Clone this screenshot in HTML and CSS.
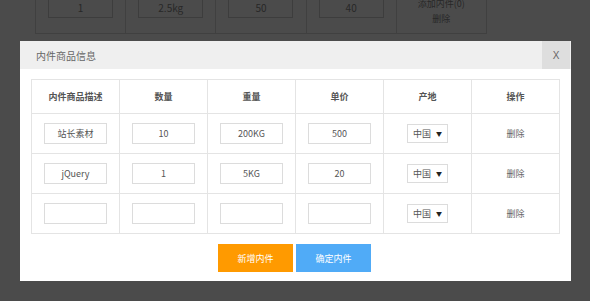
FILE: index.html
```html
<!DOCTYPE html>
<html>

<head>
  <title>内件商品信息</title>
  <link rel="stylesheet" href="styles.css">
</head>

<body>
  <div class="page">
    <table class="goods">
      <tr>
        <td><input class="goods-input" value="1"></td>
        <td><input class="goods-input" value="2.5kg"></td>
        <td><input class="goods-input" value="50"></td>
        <td><input class="goods-input" value="40"></td>
        <td class="goods-ops">
          <a href="#">添加内件(0)</a>
          <a href="#">删除</a>
        </td>
      </tr>
    </table>
  </div>

  <div class="mask"></div>

  <div class="dialog">
    <div class="dialog-head">
      <span class="dialog-title">内件商品信息</span>
      <button class="dialog-close">X</button>
    </div>

    <div class="dialog-body">
      <table class="parts">
        <tr>
          <th>内件商品描述</th>
          <th>数量</th>
          <th>重量</th>
          <th>单价</th>
          <th>产地</th>
          <th>操作</th>
        </tr>
        <tr>
          <td><input class="part-input" value="站长素材"></td>
          <td><input class="part-input" value="10"></td>
          <td><input class="part-input" value="200KG"></td>
          <td><input class="part-input" value="500"></td>
          <td>
            <span class="select-wrap">
              <select class="part-select">
                <option>中国</option>
              </select>
            </span>
          </td>
          <td><a href="#" class="del-link">删除</a></td>
        </tr>
        <tr>
          <td><input class="part-input" value="jQuery"></td>
          <td><input class="part-input" value="1"></td>
          <td><input class="part-input" value="5KG"></td>
          <td><input class="part-input" value="20"></td>
          <td>
            <span class="select-wrap">
              <select class="part-select">
                <option>中国</option>
              </select>
            </span>
          </td>
          <td><a href="#" class="del-link">删除</a></td>
        </tr>
        <tr>
          <td><input class="part-input"></td>
          <td><input class="part-input"></td>
          <td><input class="part-input"></td>
          <td><input class="part-input"></td>
          <td>
            <span class="select-wrap">
              <select class="part-select">
                <option>中国</option>
              </select>
            </span>
          </td>
          <td><a href="#" class="del-link">删除</a></td>
        </tr>
      </table>

      <div class="dialog-actions">
        <button class="btn btn-add">新增内件</button>
        <button class="btn btn-ok">确定内件</button>
      </div>
    </div>
  </div>
</body>

</html>
```

FILE: styles.css
```css
* {
  font-family: "Noto Sans CJK SC", "Noto Sans", sans-serif;
  box-sizing: border-box;
}

body {
  margin: 0;
  background-color: white;
  height: 100vh;
  overflow: hidden;
}

a {
  text-decoration: none;
}

/* page behind the dialog */
.page {
  padding-left: 35px;
}

.goods {
  width: 452px;
  margin-top: -14px;
  border-collapse: collapse;
  table-layout: fixed;
}

.goods td {
  border: 1px solid #d8d8d8;
  border-top: none;
  height: 47px;
  text-align: center;
  vertical-align: middle;
  padding: 0;
  font-size: 10px;
}

.goods-input {
  width: 65px;
  height: 21px;
  border: 1px solid #d0d0d0;
  text-align: center;
  font-size: 10px;
  color: #888;
  margin-top: -13px;
  outline: 0;
}

.goods td.goods-ops {
  vertical-align: top;
  padding-top: 10px;
}

.goods-ops a {
  display: block;
  font-size: 9px;
  line-height: 15px;
  color: #888;
}

.mask {
  position: fixed;
  top: 0;
  left: 0;
  right: 0;
  bottom: 0;
  background-color: rgba(0, 0, 0, 0.705);
}

/* dialog */
.dialog {
  position: fixed;
  top: 41px;
  left: 20px;
  width: 551px;
  height: 240px;
  background-color: white;
  z-index: 10;
}

.dialog-head {
  display: flex;
  align-items: center;
  height: 28px;
  background-color: #efefef;
}

.dialog-title {
  flex-grow: 1;
  padding-left: 16px;
  font-size: 10px;
  color: #666;
}

.dialog-close {
  width: 28px;
  height: 28px;
  margin-right: 1px;
  border: none;
  background-color: #dedede;
  color: #666;
  font-size: 10px;
  font-family: "Liberation Sans", sans-serif;
  padding: 0;
}

.dialog-body {
  padding: 10px 11px 0;
}

.parts {
  width: 100%;
  border-collapse: collapse;
  table-layout: fixed;
}

.parts th,
.parts td {
  border: 1px solid #e4e4e4;
  text-align: center;
  vertical-align: middle;
  padding: 0;
  font-size: 9px;
  line-height: 12px;
}

.parts th {
  height: 34px;
  font-weight: bold;
  color: #555;
}

.parts td {
  height: 40px;
}

.part-input {
  width: 63px;
  height: 21px;
  border: 1px solid #dcdcdc;
  text-align: center;
  font-size: 9px;
  color: #555;
  outline: 0;
  padding: 0;
  vertical-align: middle;
}

.select-wrap {
  position: relative;
  display: inline-block;
  vertical-align: middle;
}

.select-wrap::after {
  content: "▼";
  position: absolute;
  right: 6px;
  top: 4px;
  font-size: 6px;
  color: #222;
  pointer-events: none;
}

.part-select {
  appearance: none;
  width: 41px;
  height: 19px;
  border: 1px solid #dcdcdc;
  border-radius: 0;
  background-color: white;
  font-size: 9px;
  color: #555;
  padding: 0 0 0 5px;
  display: block;
}

.del-link {
  font-size: 9px;
  color: #666;
  vertical-align: middle;
}

.dialog-actions {
  display: flex;
  justify-content: center;
  gap: 3px;
  margin-top: 10px;
  padding-right: 2px;
}

.btn {
  width: 75px;
  height: 28px;
  border: none;
  color: white;
  font-size: 9px;
  cursor: pointer;
}

.btn-add {
  background-color: #ff9a00;
}

.btn-ok {
  background-color: #50abf7;
}
```
